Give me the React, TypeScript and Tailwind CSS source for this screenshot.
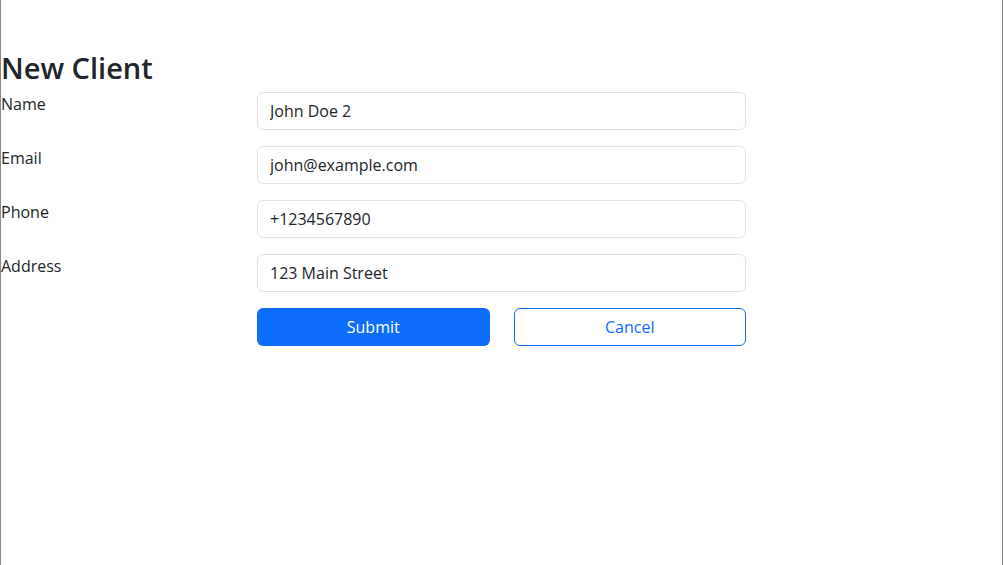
import React, { useState } from "react";

function App() {
    const [name, setName] = useState('John Doe 2');
    const [email, setEmail] = useState('john@example.com');
    const [phone, setPhone] = useState('+1234567890');
    const [address, setAddress] = useState('123 Main Street');

    const fields = [
        { id: 'name', label: 'Name', value: name, set: setName },
        { id: 'email', label: 'Email', value: email, set: setEmail },
        { id: 'phone', label: 'Phone', value: phone, set: setPhone },
        { id: 'address', label: 'Address', value: address, set: setAddress },
    ];

    const handleSubmit = (e: React.FormEvent) => {
        e.preventDefault();
        console.log('Saving client:', { name, email, phone, address });
    };

    return (
        <div className="min-h-screen bg-white border-l border-r border-[#8a8a8a] text-[#212529] font-['Open_Sans',sans-serif]">
            <div className="pt-[50px]">
                <h2 className="text-[29px] leading-[36px] font-semibold mb-[6px]">New Client</h2>
                <form onSubmit={handleSubmit}>
                    {fields.map((f) => (
                        <div key={f.id} className="flex mb-4">
                            <label htmlFor={f.id} className="w-[256px] text-base leading-6">
                                {f.label}
                            </label>
                            <input
                                id={f.id}
                                type="text"
                                value={f.value}
                                onChange={(e) => f.set(e.target.value)}
                                className="w-[489px] h-[38px] px-3 text-base border border-[#dee2e6] rounded-md focus:outline-none"
                            />
                        </div>
                    ))}
                    <div className="flex">
                        <div className="w-[256px]" />
                        <div className="w-[489px] grid grid-cols-2 gap-6">
                            <button
                                type="submit"
                                className="h-[38px] text-base text-white bg-[#0d6efd] rounded-md"
                            >
                                Submit
                            </button>
                            <button
                                type="button"
                                className="h-[38px] text-base text-[#0d6efd] bg-white border border-[#0d6efd] rounded-md"
                            >
                                Cancel
                            </button>
                        </div>
                    </div>
                </form>
            </div>
        </div>
    );
}

export default App
